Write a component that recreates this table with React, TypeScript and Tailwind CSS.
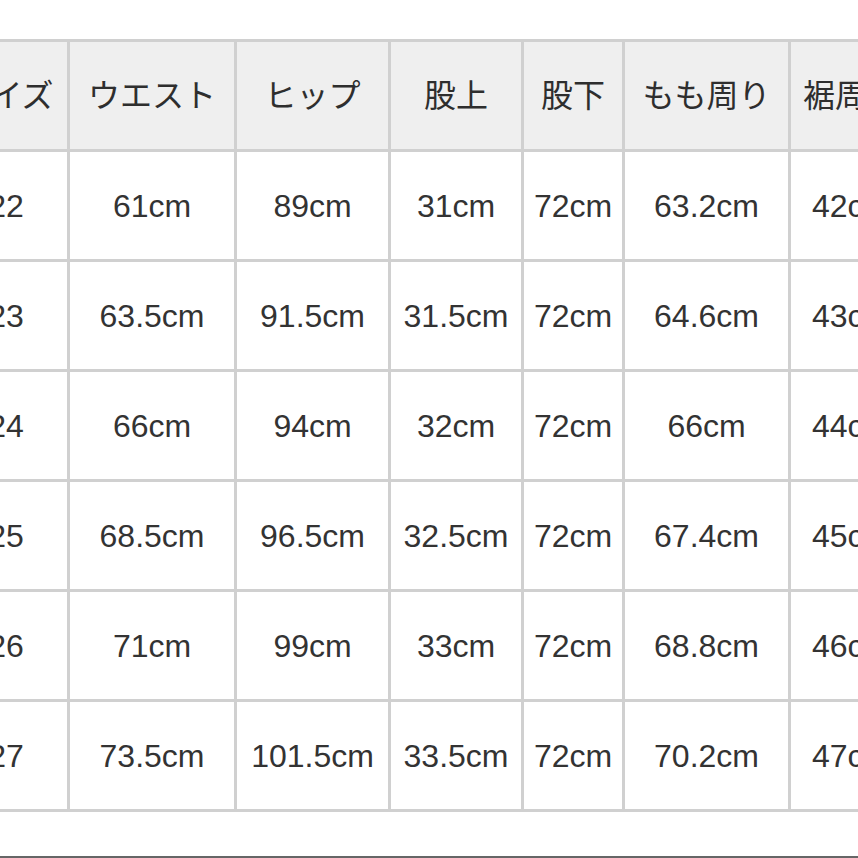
const headers = ['サイズ', 'ウエスト', 'ヒップ', '股上', '股下', 'もも周り', '裾周り'];

const rows = [
  ['22', '61cm', '89cm', '31cm', '72cm', '63.2cm', '42cm'],
  ['23', '63.5cm', '91.5cm', '31.5cm', '72cm', '64.6cm', '43cm'],
  ['24', '66cm', '94cm', '32cm', '72cm', '66cm', '44cm'],
  ['25', '68.5cm', '96.5cm', '32.5cm', '72cm', '67.4cm', '45cm'],
  ['26', '71cm', '99cm', '33cm', '72cm', '68.8cm', '46cm'],
  ['27', '73.5cm', '101.5cm', '33.5cm', '72cm', '70.2cm', '47cm'],
];

const SizeTable = () => {
  return (
    <div className="ml-[-58px] mt-[39px] grid w-max grid-cols-[122px_164px_151px_130px_98px_163px_120px] auto-rows-[107px] gap-[3px] bg-[#d0d0d0] p-[3px]">
      {/* ヘッダー */}
      {headers.map((h) => (
        <div
          key={h}
          className="flex items-center justify-center whitespace-nowrap bg-[#efefef] text-[32px] text-[#2e2e2e]"
        >
          {h}
        </div>
      ))}

      {/* サイズ行 */}
      {rows.map((row) =>
        row.map((cell, i) => (
          <div
            key={`${row[0]}-${i}`}
            className="flex items-center justify-center whitespace-nowrap bg-white text-[32px] text-[#333333]"
          >
            {cell}
          </div>
        )),
      )}
    </div>
  );
};

const App = () => {
  return (
    <div className="relative h-[858px] w-[858px] overflow-hidden bg-white font-['Liberation_Sans','Noto_Sans_CJK_JP',sans-serif]">
      <SizeTable />
      <div className="absolute bottom-0 left-0 h-[2px] w-full bg-[#666666]" />
    </div>
  );
};

export default App;
